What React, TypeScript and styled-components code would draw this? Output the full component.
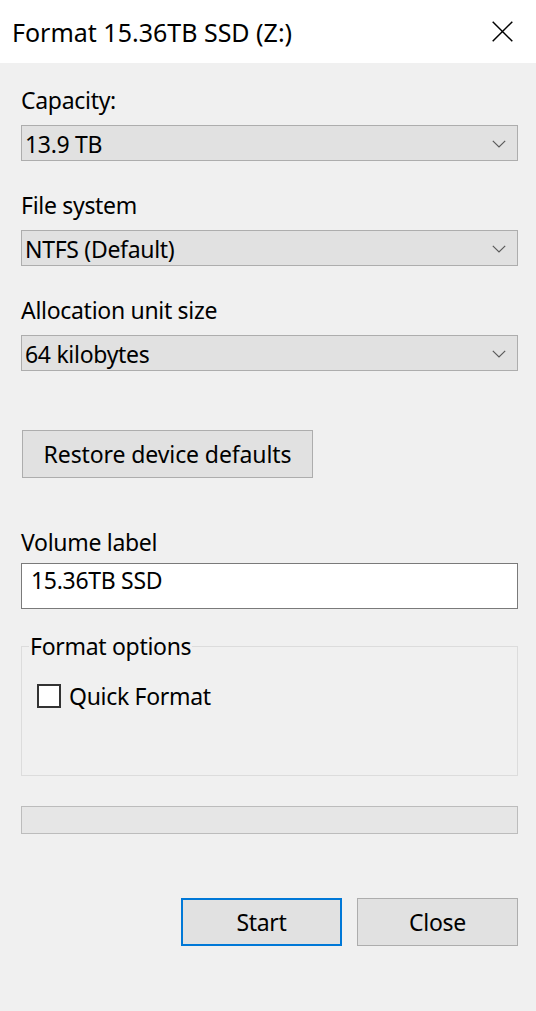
import styled, { createGlobalStyle } from "styled-components";

const GlobalStyle = createGlobalStyle`
  html, body {
    margin: 0;
    padding: 0;
    background: #f0f0f0;
  }
  body {
    font-family: "Noto Sans", "Open Sans", sans-serif;
    font-size: 23px;
    letter-spacing: -0.3px;
    color: #000;
  }
  * {
    box-sizing: border-box;
  }
`;

const Window = styled.div`
  min-height: 100vh;
  display: flex;
  flex-direction: column;
  background: #f0f0f0;
`;

const TitleBar = styled.div`
  height: 63px;
  background: #fff;
  display: flex;
  align-items: center;
  justify-content: space-between;
  padding: 0 23px 0 12px;
`;

const Title = styled.span`
  font-size: 25px;
  letter-spacing: 0;
  line-height: 32px;
`;

const Body = styled.div`
  display: flex;
  flex-direction: column;
  padding: 21px 18px 0 21px;
`;

const Label = styled.div<{ $gap?: number; $after?: number }>`
  line-height: 32px;
  margin-top: ${(p) => p.$gap ?? 0}px;
  margin-bottom: ${(p) => p.$after ?? 9}px;
`;

const Select = styled.div`
  height: 36px;
  border: 1px solid #adadad;
  background: #e1e1e1;
  display: flex;
  align-items: flex-start;
  justify-content: space-between;
  padding: 2px 11px 0 3px;
  line-height: 32px;

  svg {
    align-self: center;
    margin-top: -1px;
  }
`;

const Button = styled.div<{ $primary?: boolean; $width?: number }>`
  height: 48px;
  width: ${(p) => (p.$width ? `${p.$width}px` : "auto")};
  background: #e1e1e1;
  border: ${(p) => (p.$primary ? "2px solid #0078d7" : "1px solid #adadad")};
  display: flex;
  align-items: center;
  justify-content: center;
  line-height: 32px;
  padding: 0 20px;
`;

const RestoreButton = styled(Button)`
  margin-top: 59px;
  margin-left: 1px;
  align-self: flex-start;
  width: 291px;
  letter-spacing: -0.1px;
`;

const TextInput = styled.div`
  height: 46px;
  background: #fff;
  border: 1px solid #7a7a7a;
  padding: 0 9px;
  line-height: 32px;
`;

const Group = styled.fieldset`
  margin: 21px 0 0 0;
  padding: 18px 0 63px 0;
  border: 1px solid #dcdcdc;
  min-width: 0;
`;

const Legend = styled.legend`
  line-height: 32px;
  padding: 0 1px;
  margin-left: 7px;
`;

const CheckRow = styled.label`
  height: 32px;
  margin-left: 15px;
  display: flex;
  align-items: center;
  gap: 8px;
`;

const CheckBox = styled.span`
  width: 24px;
  height: 24px;
  border: 2px solid #333;
  background: #fff;
  display: inline-block;
`;

const Progress = styled.div`
  margin-top: 30px;
  height: 28px;
  background: #e6e6e6;
  border: 1px solid #bcbcbc;
`;

const Footer = styled.div`
  margin-top: 64px;
  display: flex;
  justify-content: flex-end;
  gap: 15px;
`;

const Chevron = () => (
  <svg width="14" height="8" viewBox="0 0 14 8">
    <path d="M0.8 0.8 L7 7 L13.2 0.8" fill="none" stroke="#5a5a5a" strokeWidth="1.2" />
  </svg>
);

const CloseIcon = () => (
  <svg width="21" height="21" viewBox="0 0 21 21">
    <path d="M0.7 0.7 L20.3 20.3 M20.3 0.7 L0.7 20.3" stroke="#000" strokeWidth="1.5" />
  </svg>
);

const fields = [
  { label: "Capacity:", value: "13.9 TB" },
  { label: "File system", value: "NTFS (Default)" },
  { label: "Allocation unit size", value: "64 kilobytes" },
];

export default function App() {
  return (
    <>
      <GlobalStyle />
      <Window>
        <TitleBar>
          <Title>Format 15.36TB SSD (Z:)</Title>
          <CloseIcon />
        </TitleBar>
        <Body>
          {fields.map((f, i) => (
            <div key={f.label}>
              <Label $gap={i === 0 ? 0 : 28}>{f.label}</Label>
              <Select>
                <span>{f.value}</span>
                <Chevron />
              </Select>
            </div>
          ))}

          <RestoreButton>Restore device defaults</RestoreButton>

          <Label $gap={48} $after={5}>Volume label</Label>
          <TextInput>15.36TB SSD</TextInput>

          <Group>
            <Legend>Format options</Legend>
            <CheckRow>
              <CheckBox />
              <span>Quick Format</span>
            </CheckRow>
          </Group>

          <Progress />

          <Footer>
            <Button $primary $width={161}>Start</Button>
            <Button $width={161}>Close</Button>
          </Footer>
        </Body>
      </Window>
    </>
  );
}
